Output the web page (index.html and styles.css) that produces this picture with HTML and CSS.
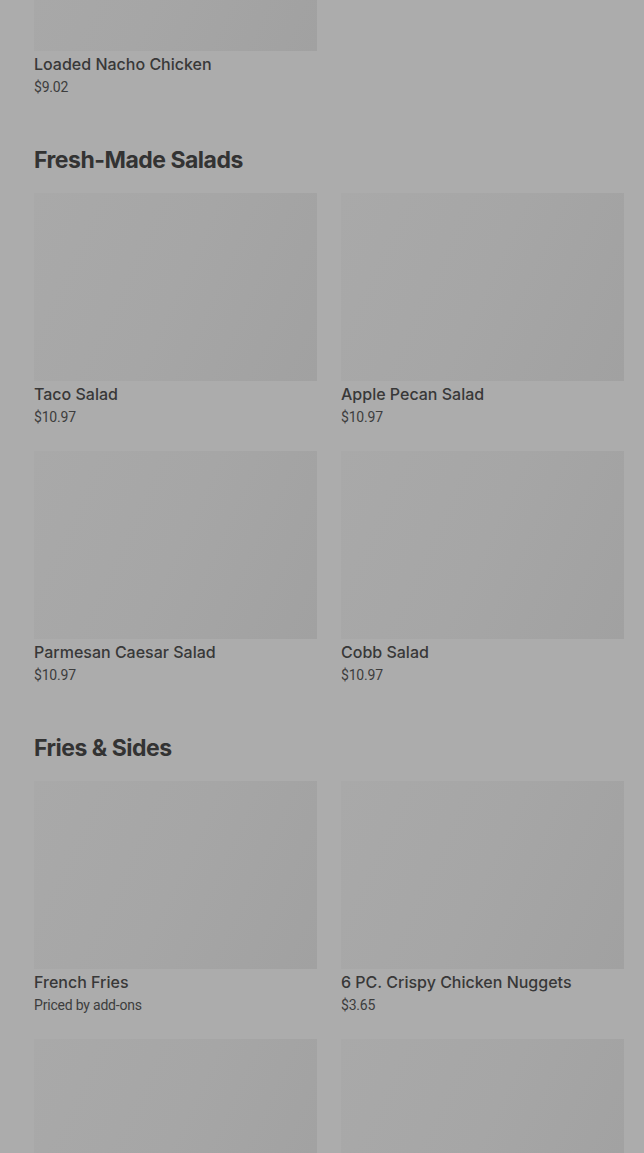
FILE: index.html
```html
<!DOCTYPE html>
<html>
<head>
    <title>Menu</title>
    <link rel="stylesheet" href="styles.css">
</head>
<body>
<div class="menu">
    <section class="seccion">
        <div class="grid">
            <div class="item">
                <div class="foto"></div>
                <div class="nombre">Loaded Nacho Chicken</div>
                <div class="precio">$9.02</div>
            </div>
        </div>
    </section>

    <section class="seccion">
        <h2>Fresh-Made Salads</h2>
        <div class="grid">
            <div class="item">
                <div class="foto"></div>
                <div class="nombre">Taco Salad</div>
                <div class="precio">$10.97</div>
            </div>
            <div class="item">
                <div class="foto"></div>
                <div class="nombre">Apple Pecan Salad</div>
                <div class="precio">$10.97</div>
            </div>
            <div class="item">
                <div class="foto"></div>
                <div class="nombre">Parmesan Caesar Salad</div>
                <div class="precio">$10.97</div>
            </div>
            <div class="item">
                <div class="foto"></div>
                <div class="nombre">Cobb Salad</div>
                <div class="precio">$10.97</div>
            </div>
        </div>
    </section>

    <section class="seccion">
        <h2>Fries &amp; Sides</h2>
        <div class="grid">
            <div class="item">
                <div class="foto"></div>
                <div class="nombre">French Fries</div>
                <div class="precio">Priced by add-ons</div>
            </div>
            <div class="item">
                <div class="foto"></div>
                <div class="nombre">6 PC. Crispy Chicken Nuggets</div>
                <div class="precio">$3.65</div>
            </div>
            <div class="item">
                <div class="foto"></div>
            </div>
            <div class="item">
                <div class="foto"></div>
            </div>
        </div>
    </section>
</div>
</body>
</html>
```

FILE: styles.css
```css
body {
    margin: 0;
    background: #acacac;
    font-family: Inter, "Liberation Sans", sans-serif;
    color: #363636;
    overflow: hidden;
}

.menu {
    margin-top: -137px;
    padding: 0 20px 0 34px;
}

.seccion {
    padding-bottom: 25px;
}

h2 {
    margin: 25px 0 19px;
    font-size: 23px;
    line-height: 28px;
    font-weight: 700;
    letter-spacing: -0.5px;
    color: #333333;
}

.grid {
    display: grid;
    grid-template-columns: 283px 283px;
    column-gap: 24px;
    row-gap: 25px;
}

.foto {
    height: 188px;
    background: linear-gradient(115deg, #a9a9a9 0%, #a6a6a6 50%, #a1a1a1 100%);
}

.nombre {
    margin-top: 3px;
    font-size: 16px;
    line-height: 20px;
    font-weight: 500;
    color: #383838;
}

.precio {
    margin-top: 4px;
    font-family: Roboto, "Liberation Sans", sans-serif;
    font-size: 14px;
    line-height: 18px;
    color: #3d3d3d;
    letter-spacing: -0.2px;
}
```
